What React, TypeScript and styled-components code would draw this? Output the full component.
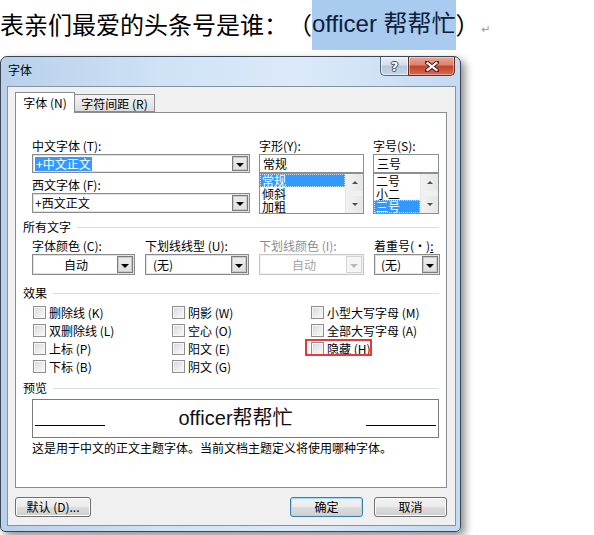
import React from "react";
import styled, { createGlobalStyle } from "styled-components";

const GlobalStyle = createGlobalStyle`
  html, body { margin: 0; padding: 0; background: #fff; }
  body { font-family: "Noto Sans CJK SC", sans-serif; text-spacing-trim: space-all; }
`;

const CJK = `"Noto Sans CJK SC", "Liberation Sans", sans-serif`;

const Page = styled.div`
  width: 594px;
  height: 535px;
  overflow: hidden;
  background: #fff;
  display: flex;
  flex-direction: column;
`;

const Headline = styled.div`
  display: flex;
  align-items: stretch;
  height: 50px;
  font-family: ${CJK};
  font-size: 24px;
  color: #000;
  white-space: nowrap;
  text-spacing-trim: space-all;
`;

const HeadText = styled.span`
  line-height: 48px;
`;

const Highlight = styled.span`
  background: #a8cbef;
  color: #0f213a;
  line-height: 48px;
  font-family: "Liberation Sans", "Noto Sans CJK SC", sans-serif;
`;

const ReturnMark = styled.span`
  font-family: "DejaVu Sans", sans-serif;
  font-size: 11px;
  color: #9a9a9a;
  align-self: center;
  margin-top: 8px;
  margin-left: 2px;
`;

const Dialog = styled.div`
  margin-top: 6px;
  width: 461px;
  height: 476px;
  box-sizing: border-box;
  border: 1px solid #3b4756;
  border-radius: 7px 7px 5px 5px;
  background: linear-gradient(to right, #b8d0ea 0%, #cfe2f6 35%, #dbeafa 65%, #c4daf1 100%);
  box-shadow: 4px 4px 8px rgba(0, 0, 0, 0.45);
  display: flex;
  flex-direction: column;
  padding: 0 4px 5px 6px;
  font-family: ${CJK};
  font-size: 12px;
`;

const TitleBar = styled.div`
  height: 29px;
  display: flex;
  align-items: flex-start;
`;

const TitleText = styled.div`
  margin-top: 6px;
  margin-left: 1px;
  line-height: 14px;
  font-size: 12px;
  color: #000;
`;

const CaptionButtons = styled.div`
  margin-left: auto;
  margin-right: 1px;
  display: flex;
`;

const HelpButton = styled.div`
  width: 28px;
  height: 19px;
  box-sizing: border-box;
  border: 1px solid #56687e;
  border-top: none;
  border-right: none;
  border-radius: 0 0 0 5px;
  background: linear-gradient(#e8eff8 0%, #d3dfec 45%, #b5c6da 50%, #c9d7e7 100%);
  box-shadow: inset 0 0 0 1px rgba(255, 255, 255, 0.55);
  display: flex;
  align-items: center;
  justify-content: center;
  font-family: "DejaVu Sans", sans-serif;
  font-weight: bold;
  font-size: 13px;
  color: #fff;
  text-shadow: 0 0 1px #203650, 1px 0 0 #3b5573, -1px 0 0 #3b5573, 0 1px 0 #3b5573, 0 -1px 0 #3b5573;
`;

const CloseButton = styled.div`
  width: 47px;
  height: 19px;
  box-sizing: border-box;
  border: 1px solid #6a2c22;
  border-top: none;
  border-radius: 0 0 5px 0;
  background: linear-gradient(#eaa898 0%, #dc806b 45%, #c5402a 50%, #d46b53 100%);
  box-shadow: inset 0 0 0 1px rgba(255, 255, 255, 0.4);
  display: flex;
  align-items: center;
  justify-content: center;
`;

const Client = styled.div`
  flex: 1;
  box-sizing: border-box;
  background: #f0f0f0;
  border: 1px solid #83939f;
  display: flex;
  flex-direction: column;
  padding: 5px 8px 0 7px;
`;

const TabStrip = styled.div`
  display: flex;
  align-items: flex-end;
  height: 20px;
`;

const Tab = styled.div<{ $active?: boolean; $w: number }>`
  position: relative;
  z-index: ${(p) => (p.$active ? 2 : 1)};
  width: ${(p) => p.$w}px;
  height: ${(p) => (p.$active ? 21 : 18)}px;
  margin-bottom: ${(p) => (p.$active ? -1 : 0)}px;
  margin-left: ${(p) => (p.$active ? 0 : -1)}px;
  box-sizing: border-box;
  border: 1px solid #898c95;
  border-bottom: ${(p) => (p.$active ? "none" : "1px solid #898c95")};
  background: ${(p) => (p.$active ? "#fff" : "linear-gradient(#f3f3f3, #e9e9e9 50%, #dcdcdc)")};
  display: flex;
  align-items: center;
  justify-content: center;
  padding-top: ${(p) => (p.$active ? 0 : 1)}px;
  font-size: 12px;
  line-height: 14px;
  color: #000;
  white-space: nowrap;
`;

const TabPage = styled.div`
  width: 432px;
  height: 376px;
  box-sizing: border-box;
  border: 1px solid #898c95;
  background: #fff;
  padding: 26px 7px 0 7px;
  display: flex;
  flex-direction: column;
`;

const TopArea = styled.div`
  margin-left: 9px;
  display: grid;
  grid-template-columns: 218px 105px 66px;
  column-gap: 9px;
`;

const Column = styled.div`
  display: flex;
  flex-direction: column;
`;

const Label = styled.div<{ $disabled?: boolean; $gap?: number }>`
  height: 14px;
  line-height: 14px;
  font-size: 12px;
  white-space: nowrap;
  margin-top: ${(p) => p.$gap ?? 0}px;
  margin-bottom: 1px;
  color: ${(p) => (p.$disabled ? "#8d8d8d" : "#000")};
`;

const Mn = styled.span`
  text-decoration: underline;
`;

const ComboBox = styled.div<{ $h: number; $disabled?: boolean }>`
  height: ${(p) => p.$h}px;
  box-sizing: border-box;
  display: flex;
  align-items: stretch;
  border: 1px solid ${(p) => (p.$disabled ? "#c6c6c6" : "#8b8b8b")};
  box-shadow: inset 0 0 0 1px ${(p) => (p.$disabled ? "#f0f0f0" : "#e2e2e2")};
  background: #fff;
  padding: 1px;
`;

const ComboText = styled.div<{ $center?: boolean; $pad?: number; $disabled?: boolean }>`
  flex: 1;
  display: flex;
  align-items: center;
  justify-content: ${(p) => (p.$center ? "center" : "flex-start")};
  padding-left: ${(p) => p.$pad ?? 1}px;
  font-size: 12px;
  line-height: 14px;
  color: ${(p) => (p.$disabled ? "#a3a3a3" : "#000")};
  white-space: nowrap;
`;

const Selected = styled.span`
  background: #3399ff;
  color: #fff;
  padding: 0 1px;
`;

const DropButton = styled.div<{ $disabled?: boolean }>`
  width: 16px;
  box-sizing: border-box;
  border: 1px solid ${(p) => (p.$disabled ? "#d2d2d2" : "#7c7c7c")};
  box-shadow: inset 0 0 0 1px ${(p) => (p.$disabled ? "#f7f7f7" : "#c9c9c9")};
  background: ${(p) => (p.$disabled ? "#f4f4f4" : "linear-gradient(#ededed, #e0e0e0)")};
  display: flex;
  align-items: center;
  justify-content: center;
  padding-top: 2px;
`;

const DownArrow = styled.span<{ $disabled?: boolean }>`
  width: 0;
  height: 0;
  border-left: 4px solid transparent;
  border-right: 4px solid transparent;
  border-top: 4px solid ${(p) => (p.$disabled ? "#b9b9b9" : "#000")};
`;

const TextBox = styled.div`
  height: 19px;
  box-sizing: border-box;
  border: 1px solid #8e8f8f;
  display: flex;
  align-items: center;
  padding-left: 3px;
  font-size: 12px;
  color: #000;
`;

const ListBox = styled.div`
  height: 41px;
  box-sizing: border-box;
  border: 1px solid #8e8f8f;
  display: flex;
  overflow: hidden;
`;

const ListItems = styled.div`
  flex: 1;
  display: flex;
  flex-direction: column;
`;

const ListItem = styled.div<{ $selected?: boolean }>`
  height: 13px;
  line-height: 13px;
  font-size: 12px;
  padding-left: 2px;
  box-sizing: border-box;
  background: ${(p) => (p.$selected ? "#3399ff" : "transparent")};
  color: ${(p) => (p.$selected ? "#fff" : "#000")};
  outline: ${(p) => (p.$selected ? "1px dotted #c9e3ff" : "none")};
  outline-offset: -1px;
  overflow: hidden;
`;

const ScrollBar = styled.div`
  width: 17px;
  background: #f0f0f0;
  border-left: 1px solid #e6e6e6;
  display: flex;
  flex-direction: column;
  justify-content: space-between;
`;

const ScrollButton = styled.div`
  height: 17px;
  background: linear-gradient(to right, #f2f2f2, #e6e6e6);
  display: flex;
  align-items: center;
  justify-content: center;
`;

const ScrollArrow = styled.span<{ $up?: boolean }>`
  width: 0;
  height: 0;
  border-left: 3px solid transparent;
  border-right: 3px solid transparent;
  ${(p) => (p.$up ? "border-bottom: 3px solid #505050;" : "border-top: 3px solid #505050;")}
`;

const SectionHeader = styled.div<{ $gap: number }>`
  display: flex;
  align-items: center;
  height: 14px;
  margin-top: ${(p) => p.$gap}px;
  width: 416px;
  font-size: 12px;
  line-height: 14px;
  color: #000;
  white-space: nowrap;
`;

const SectionRule = styled.div`
  flex: 1;
  height: 1px;
  margin-left: 6px;
  background: #d5dfe5;
`;

const ColorRow = styled.div`
  margin-left: 9px;
  margin-top: 5px;
  display: grid;
  grid-template-columns: 103px 104px 105px 66px;
  column-gap: 10px;
`;

const CheckGrid = styled.div`
  margin-left: 10px;
  margin-top: 3px;
  display: grid;
  grid-template-columns: 139px 139px 120px;
  grid-template-rows: repeat(4, 18px);
`;

const CheckItem = styled.div<{ $col: number; $row: number }>`
  position: relative;
  grid-column: ${(p) => p.$col};
  grid-row: ${(p) => p.$row};
  display: flex;
  align-items: center;
  font-size: 12px;
  white-space: nowrap;
`;

const CheckBox = styled.span`
  width: 13px;
  height: 13px;
  box-sizing: border-box;
  border: 1px solid #8f8f8f;
  background: linear-gradient(135deg, #d6d6d6 0%, #ececec 55%, #fafafa 100%);
  box-shadow: inset 0 0 0 1px #f6f6f6;
  margin-right: 3px;
  flex: none;
`;

const Annotation = styled.span`
  position: absolute;
  left: -6px;
  top: 0px;
  width: 67px;
  height: 17px;
  box-sizing: border-box;
  border: 2px solid #e8383d;
  pointer-events: none;
`;

const PreviewBox = styled.div`
  margin-left: 9px;
  margin-top: 4px;
  width: 407px;
  height: 39px;
  box-sizing: border-box;
  border: 1px solid #7a7a7a;
  display: flex;
  align-items: center;
`;

const PreviewRule = styled.div<{ $side: "left" | "right" }>`
  width: 70px;
  height: 1px;
  background: #000;
  align-self: flex-end;
  margin-bottom: 11px;
  margin-left: ${(p) => (p.$side === "left" ? 2 : 0)}px;
  margin-right: ${(p) => (p.$side === "right" ? 2 : 0)}px;
`;

const PreviewText = styled.div`
  flex: 1;
  text-align: center;
  font-family: "Liberation Sans", "Noto Sans CJK SC", sans-serif;
  font-size: 20px;
  line-height: 24px;
  color: #111;
  padding-bottom: 2px;
`;

const Description = styled.div`
  margin-left: 9px;
  margin-top: 3px;
  height: 14px;
  line-height: 14px;
  font-size: 12px;
  color: #000;
  white-space: nowrap;
`;

const ButtonRow = styled.div`
  margin-top: 9px;
  display: flex;
  align-items: center;
  gap: 11px;
`;

const PushButton = styled.div<{ $w: number; $default?: boolean; $push?: boolean }>`
  width: ${(p) => p.$w}px;
  height: 20px;
  box-sizing: border-box;
  margin-left: ${(p) => (p.$push ? "auto" : "0")};
  border: 1px solid ${(p) => (p.$default ? "#3c7fb1" : "#707070")};
  border-radius: 3px;
  background: linear-gradient(#f2f2f2 0%, #ebebeb 50%, #dddddd 51%, #cfcfcf 100%);
  box-shadow: inset 0 0 0 1px ${(p) => (p.$default ? "#9fdcf8" : "#fbfbfb")};
  display: flex;
  align-items: center;
  justify-content: center;
  font-size: 12px;
  line-height: 14px;
  color: #000;
  white-space: nowrap;
`;

const Combo = ({
  h,
  children,
  center,
  pad,
  disabled,
}: {
  h: number;
  children: React.ReactNode;
  center?: boolean;
  pad?: number;
  disabled?: boolean;
}) => (
  <ComboBox $h={h} $disabled={disabled}>
    <ComboText $center={center} $pad={pad} $disabled={disabled}>
      {children}
    </ComboText>
    <DropButton $disabled={disabled}>
      <DownArrow $disabled={disabled} />
    </DropButton>
  </ComboBox>
);

const List = ({ items, selected }: { items: string[]; selected: number }) => (
  <ListBox>
    <ListItems>
      {items.map((it, i) => (
        <ListItem key={it} $selected={i === selected}>
          {it}
        </ListItem>
      ))}
    </ListItems>
    <ScrollBar>
      <ScrollButton>
        <ScrollArrow $up />
      </ScrollButton>
      <ScrollButton>
        <ScrollArrow />
      </ScrollButton>
    </ScrollBar>
  </ListBox>
);

const checks: { label: string; mark?: boolean }[][] = [
  [{ label: "删除线 (K)" }, { label: "双删除线 (L)" }, { label: "上标 (P)" }, { label: "下标 (B)" }],
  [{ label: "阴影 (W)" }, { label: "空心 (O)" }, { label: "阳文 (E)" }, { label: "阴文 (G)" }],
  [{ label: "小型大写字母 (M)" }, { label: "全部大写字母 (A)" }, { label: "隐藏 (H)", mark: true }],
];

export default function App() {
  return (
    <Page>
      <GlobalStyle />
      <Headline>
        <HeadText>表亲们最爱的头条号是谁：（</HeadText>
        <Highlight>officer 帮帮忙</Highlight>
        <HeadText>）</HeadText>
        <ReturnMark>↵</ReturnMark>
      </Headline>

      <Dialog>
        <TitleBar>
          <TitleText>字体</TitleText>
          <CaptionButtons>
            <HelpButton>?</HelpButton>
            <CloseButton>
              <svg width="14" height="11" viewBox="0 0 14 11">
                <path d="M2 1.5 L12 9.5 M12 1.5 L2 9.5" stroke="#4a1a12" strokeWidth="4" strokeLinecap="square" />
                <path d="M2.5 2 L11.5 9 M11.5 2 L2.5 9" stroke="#ffffff" strokeWidth="2.2" strokeLinecap="square" />
              </svg>
            </CloseButton>
          </CaptionButtons>
        </TitleBar>

        <Client>
          <TabStrip>
            <Tab $active $w={60}>字体 (N)</Tab>
            <Tab $w={81}>字符间距 (R)</Tab>
          </TabStrip>
          <TabPage>
            <TopArea>
              <Column>
                <Label>中文字体 (T):</Label>
                <Combo h={19}>
                  <Selected>+中文正文</Selected>
                </Combo>
                <Label $gap={5}>西文字体 (F):</Label>
                <Combo h={20}>+西文正文</Combo>
              </Column>
              <Column>
                <Label>字形(Y):</Label>
                <TextBox>常规</TextBox>
                <List items={["常规", "倾斜", "加粗"]} selected={0} />
              </Column>
              <Column>
                <Label>字号(S):</Label>
                <TextBox>三号</TextBox>
                <List items={["二号", "小二", "三号"]} selected={2} />
              </Column>
            </TopArea>

            <SectionHeader $gap={6}>
              所有文字
              <SectionRule />
            </SectionHeader>

            <ColorRow>
              <Column>
                <Label>字体颜色 (C):</Label>
                <Combo h={21} center>
                  自动
                </Combo>
              </Column>
              <Column>
                <Label>下划线线型 (U):</Label>
                <Combo h={21} pad={6}>
                  (无)
                </Combo>
              </Column>
              <Column>
                <Label $disabled>下划线颜色 (I):</Label>
                <Combo h={21} center disabled>
                  自动
                </Combo>
              </Column>
              <Column>
                <Label>
                  着重号(·)<Mn>:</Mn>
                </Label>
                <Combo h={21} pad={5}>
                  (无)
                </Combo>
              </Column>
            </ColorRow>

            <SectionHeader $gap={11}>
              效果
              <SectionRule />
            </SectionHeader>

            <CheckGrid>
              {checks.map((col, ci) =>
                col.map((c, ri) => (
                  <CheckItem key={`${ci}-${ri}`} $col={ci + 1} $row={ri + 1}>
                    <CheckBox />
                    {c.label}
                    {c.mark && <Annotation />}
                  </CheckItem>
                ))
              )}
            </CheckGrid>

            <SectionHeader $gap={6}>
              预览
              <SectionRule />
            </SectionHeader>

            <PreviewBox>
              <PreviewRule $side="left" />
              <PreviewText>officer帮帮忙</PreviewText>
              <PreviewRule $side="right" />
            </PreviewBox>

            <Description>这是用于中文的正文主题字体。当前文档主题定义将使用哪种字体。</Description>
          </TabPage>

          <ButtonRow>
            <PushButton $w={76}>默认 (D)...</PushButton>
            <PushButton $w={73} $default $push>
              确定
            </PushButton>
            <PushButton $w={73}>取消</PushButton>
          </ButtonRow>
        </Client>
      </Dialog>
    </Page>
  );
}
